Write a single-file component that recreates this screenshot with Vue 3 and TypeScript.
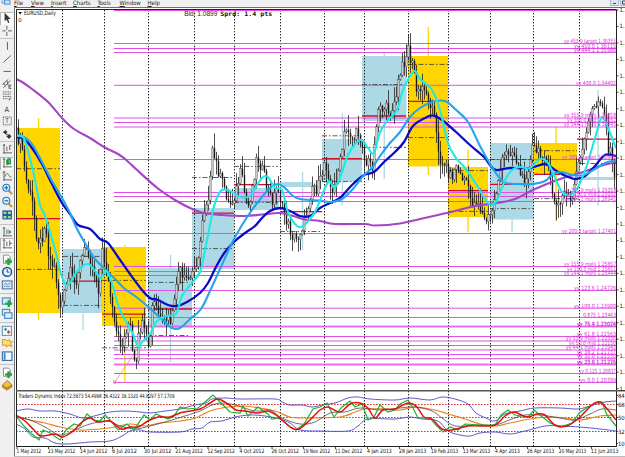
<script setup lang="ts">
/**
 * Trading terminal: menu bar, drawing toolbar and the EURUSD daily chart
 * with moving averages, monthly range boxes, fib levels and the TDI panel.
 */
type Point = [number, number]

interface Candle {
  x: number
  high: number
  low: number
  top: number
  height: number
  up: boolean
}

const menus = ['File', 'View', 'Insert', 'Charts', 'Tools', 'Window', 'Help']

const toolGroups: string[][] = [
  ['cursor', 'cross'],
  ['vline', 'trend', 'hline', 'channel', 'fibo', 'text', 'label', 'arrows'],
  ['bars', 'candles', 'line', 'zoomin', 'zoomout', 'tile'],
  ['scroll', 'shift'],
  ['add', 'clock', 'template'],
  ['order', 'windows'],
  ['market', 'star', 'terminal'],
  ['add', 'book'],
]
const pressed = ['cursor', 'candles', 'shift']

const separators = [62.5, 104.5, 148.5, 194.5, 234.5, 280.5, 324.5, 364.5, 408.5, 448.5, 490.5, 533.5, 579.5]

// Fib levels: y, label, left edge of the label
const levels: [number, string, number][] = [
  [10.5, '', 0],
  [43.5, 'yy 453.9 target 1.36355', 564],
  [48.5, 'yy 450.0 1.36115', 574],
  [52.5, 'yy 444.1 1.35988', 574],
  [85.3, 'yy 400.0  1.34402', 576],
  [118, 'yy 355.9 mofs 1.32858', 564],
  [122.5, 'yy 350.0 mid 1.32652', 567],
  [127, 'yy 344.1 mofs 1.32445', 564],
  [159.5, 'yy 300.0 target 1.30901', 562],
  [192.5, 'yy 255.9 mofs 1.29358', 564],
  [196.5, 'yy 250.0 mid 1.29152', 567],
  [201.5, 'yy 244.1 mofs 1.28945', 564],
  [233.5, 'yy 200.0 target 1.27401', 562],
  [266.5, 'yy 155.9 mofs 1.25857', 564],
  [271.5, 'yy 150.0 mid 1.25651', 567],
  [275.5, 'yy 144.1 mofs 1.25444', 564],
  [290.5, 'yy 123.6  1.24726', 574],
  [308.2, 'yy 100.0  1.23900', 574],
  [317.5, '0.875  1.23463', 583],
  [326.2, 'yy 76.4  1.23074', 577],
  [326.9, 'yy 75.0  1.23026', 577],
  [336.5, 'yy 61.8  1.22563', 577],
  [341, 'yy 55.9 mofs 1.22356', 566],
  [345.5, 'yy 50.0 mid 1.22150', 569],
  [350, 'yy 44.1 mofs 1.21943', 566],
  [354.5, 'yy 38.2  1.21737', 577],
  [358.7, 'yy 32.0  1.21530', 577],
  [364.1, 'yy 23.6  1.21226', 577],
  [364.9, 'yy 25.0  1.21275', 577],
  [373.5, 'yy 0.125 1.20837', 579],
  [382.5, 'yy 0.0  1.20399', 580],
]

// Monthly range boxes: x1, x2, top, bottom, colour
const boxes: [number, number, number, number, string][] = [
  [16, 60, 128, 313, 'gold'],
  [62.5, 102, 249, 313, 'blue'],
  [102, 146, 247, 326, 'gold'],
  [148, 192, 268, 326, 'blue'],
  [192, 234, 208, 269, 'blue'],
  [234.5, 279, 188, 210, 'blue'],
  [280, 313, 182, 187, 'blue'],
  [322, 362, 139, 181.5, 'blue'],
  [362, 406.5, 56, 121, 'blue'],
  [408, 448, 56, 166.5, 'gold'],
  [448, 488, 167, 217, 'gold'],
  [490, 533.5, 143, 219.5, 'blue'],
  [534, 577, 143, 174, 'gold'],
  [579, 616, 177, 180, 'blue'],
]

const ranges: [number, number, number, string][] = [
  [38.5, 118, 128, 'gold'], [38.5, 313, 320, 'gold'], [83, 313, 330, 'blue'],
  [124.8, 245, 382, 'gold'], [170.5, 255, 362, 'blue'], [302.5, 172, 250, 'blue'],
  [342.3, 113, 205, 'blue'], [384.2, 53, 179, 'blue'], [428.2, 27, 175, 'gold'],
  [468, 150, 232, 'gold'], [512, 219, 232, 'blue'], [556, 127, 221, 'gold'],
  [598, 90, 206, 'blue'],
]

const opens: [number, number, number][] = [
  [16, 60.5, 218.7], [67, 102, 281.2], [102, 146, 314.2], [148, 192, 309], [192, 234, 213.2],
  [234, 279, 184.6], [280, 322, 211.7], [322, 362, 158.7], [362, 406, 116], [408, 432, 101.3],
  [448, 488, 190.7], [490, 533, 184.4], [534, 560, 174.3], [577, 616, 139.2],
]

const pivots: [number, number, number][] = [
  [16, 60, 168.7], [16, 60, 269.4], [63, 102, 256.4], [63, 102, 305.4], [102, 146, 280.4],
  [102, 146, 347.8], [148, 190, 282.4], [148, 190, 335.5], [192, 234, 177.5], [192, 234, 248.6],
  [234, 278, 166.4], [234, 278, 202.4], [280, 320, 231.5], [322, 362, 135.8], [322, 362, 181.6],
  [362, 406, 84.5], [362, 406, 147.4], [408, 448, 64.4], [408, 448, 137.6], [448, 488, 170.6],
  [448, 488, 211.4], [490, 533, 159.5], [490, 533, 208.6], [534, 577, 150.7], [534, 577, 198.6],
  [580, 616, 163.5],
]

const slow: Point[] = [[16, 79], [22, 82], [32, 89], [48, 102], [62, 118], [74, 129], [90, 138], [104, 147], [118, 154], [125, 159], [136, 169], [148, 180], [160, 190], [175, 200], [190, 208], [204, 213], [222, 215], [245, 216], [262, 214.5], [280, 213], [293, 216], [305, 219.5], [320, 221], [335, 224], [365, 224], [375, 225.5], [400, 223.5], [420, 219], [440, 214.5], [455, 211], [475, 206], [497, 203], [515, 199], [535, 189], [560, 179], [580, 173], [600, 166], [616, 162]]
const navy: Point[] = [[16, 137], [24, 139], [32, 148], [42, 164], [52, 184], [62, 203], [70, 214], [78, 225], [90, 229], [100, 239], [108, 243], [118, 257], [130, 274], [142, 290], [150, 298], [158, 300], [168, 305], [177, 306], [187, 302], [200, 293], [208, 283], [217, 265], [225, 252], [235, 241], [245, 233], [255, 226], [262, 218], [270, 211], [280, 208], [290, 211], [300, 216], [310, 216], [320, 208], [330, 203], [340, 198], [352, 185], [364, 175], [374, 172], [385, 161], [395, 152], [404, 142], [413, 126], [425, 118], [433, 115.5], [442, 120], [455, 131], [470, 145], [484, 157], [490, 165], [496, 170], [510, 168], [530, 168], [545, 164], [555, 170], [566, 176], [576, 179], [585, 176], [595, 166], [605, 155], [616, 156]]
const azure: Point[] = [[16, 136], [24, 137], [32, 144], [42, 162], [52, 181], [62, 198], [70, 213], [76, 227], [85, 243], [95, 259], [105, 269], [115, 279], [125, 289], [135, 296], [145, 304], [155, 313], [165, 322], [172, 328], [180, 328], [190, 319], [201, 309], [210, 291], [220, 269], [232, 243], [242, 225], [252, 210], [262, 197], [270, 188], [278, 184], [285, 188], [293, 196], [300, 199], [312, 200], [322, 201], [332, 202], [342, 199], [352, 190], [364, 175], [372, 168], [380, 156], [390, 143], [400, 132], [410, 117], [420, 108], [432, 102], [445, 101], [455, 109], [468, 122], [480, 146], [490, 164], [498, 176], [506, 183], [520, 184], [533, 184], [545, 181], [553, 174], [562, 172], [572, 175], [584, 175], [595, 169], [605, 163], [616, 160]]
const cyan: Point[] = [[16, 136], [23, 137], [28, 151], [34, 175], [40, 205], [44, 213], [50, 232], [56, 253], [62, 277], [68, 285], [78, 270], [88, 264], [95, 271], [101, 278], [106, 271], [112, 283], [118, 305], [124, 318], [132, 332], [138, 347], [142, 342], [150, 334], [156, 322], [166, 316], [176, 314], [182, 296], [190, 285], [200, 272], [206, 245], [212, 215], [216, 200], [222, 190], [230, 191], [240, 197], [250, 196], [257, 185], [263, 177], [268, 177], [275, 188], [282, 190], [288, 212], [297, 226], [304, 225], [315, 212], [328, 182], [334, 188], [340, 178], [348, 155], [356, 143], [362, 140], [368, 148], [374, 153], [380, 132], [388, 120], [397, 110], [403, 90], [410, 76], [415, 71], [420, 79], [432, 90], [440, 110], [448, 143], [456, 158], [465, 168], [478, 187], [488, 203], [496, 202], [505, 180], [512, 170], [520, 167], [530, 168], [540, 159], [548, 163], [556, 180], [562, 192], [570, 195], [578, 187], [587, 165], [595, 138], [602, 117], [608, 128], [616, 148]]

const price: Point[] = [[16, 130], [20, 140], [24, 150], [26, 175], [30, 190], [34, 205], [36, 222], [38, 237], [42, 243], [46, 222], [50, 255], [52, 262], [56, 268], [60, 298], [62, 308], [64, 300], [68, 285], [71, 272], [76, 285], [80, 268], [84, 255], [88, 245], [92, 262], [96, 275], [100, 290], [103, 250], [106, 262], [109, 280], [112, 300], [116, 330], [120, 340], [124, 346], [127, 330], [131, 320], [133, 350], [137, 372], [140, 332], [143, 325], [148, 340], [151, 350], [153, 308], [156, 303], [160, 315], [163, 328], [168, 318], [172, 322], [176, 302], [178, 275], [181, 270], [184, 282], [188, 278], [192, 280], [195, 264], [200, 262], [203, 220], [208, 200], [211, 190], [213, 152], [217, 162], [222, 180], [226, 188], [230, 205], [234, 200], [238, 188], [242, 172], [246, 195], [249, 208], [253, 190], [258, 157], [262, 165], [265, 175], [270, 195], [274, 200], [279, 185], [283, 207], [288, 222], [293, 235], [298, 240], [302, 230], [306, 220], [311, 198], [314, 183], [318, 190], [322, 180], [326, 160], [330, 175], [333, 198], [337, 180], [342, 160], [346, 132], [349, 129], [354, 140], [359, 132], [364, 145], [366, 165], [370, 162], [374, 165], [378, 115], [382, 102], [386, 117], [388, 105], [392, 115], [396, 105], [400, 80], [404, 65], [408, 54], [409, 45], [412, 62], [415, 68], [418, 95], [422, 90], [426, 85], [430, 105], [434, 100], [437, 130], [440, 160], [443, 160], [448, 168], [452, 178], [456, 170], [458, 162], [460, 175], [468, 180], [470, 195], [475, 205], [478, 198], [482, 210], [486, 222], [492, 215], [497, 195], [500, 175], [504, 160], [508, 152], [512, 150], [516, 155], [520, 168], [524, 182], [528, 172], [532, 160], [534, 145], [538, 152], [542, 157], [546, 152], [550, 175], [554, 195], [558, 208], [562, 203], [566, 190], [570, 195], [574, 200], [577, 175], [580, 165], [584, 150], [588, 125], [592, 115], [597, 105], [602, 98], [606, 115], [609, 145], [612, 155], [616, 175]]

// Traders Dynamic Index
const bandTop: Point[] = [[16, 411], [28, 409], [40, 411], [55, 411], [70, 414], [83, 418], [98, 415], [110, 412], [125, 411], [140, 412], [150, 413], [165, 411], [180, 409], [195, 405], [206, 403], [212, 399], [225, 398], [240, 399], [275, 399], [282, 402], [290, 405], [302, 405], [312, 407], [322, 405], [335, 403], [348, 398], [358, 397], [370, 399], [395, 400], [410, 398], [430, 400], [442, 397], [455, 399], [468, 404], [476, 413], [486, 418], [495, 421], [505, 414], [520, 411], [535, 408], [560, 408], [578, 409], [590, 406], [605, 402], [616, 401]]
const bandLow: Point[] = [[16, 424], [25, 429], [33, 437], [45, 438], [55, 443], [68, 444], [90, 442], [110, 441], [122, 436], [130, 431], [140, 430], [150, 432], [180, 432], [192, 429], [202, 428], [210, 422], [222, 421], [235, 417], [250, 415], [265, 416], [280, 419], [290, 423], [300, 430], [320, 431], [348, 431], [358, 426], [368, 419], [395, 419], [410, 417], [422, 419], [438, 421], [448, 431], [460, 435], [470, 436], [480, 433], [495, 432], [510, 434], [525, 431], [545, 426], [560, 426], [580, 427], [600, 429], [616, 431]]
const base: Point[] = [[16, 416], [30, 420], [45, 423], [60, 427], [80, 430], [100, 429], [115, 427], [130, 424], [145, 426], [160, 423], [180, 421], [195, 418], [210, 411], [222, 408], [240, 406], [260, 408], [275, 411], [290, 417], [305, 418], [340, 417], [355, 412], [365, 409], [385, 409], [400, 410], [415, 407], [435, 410], [448, 414], [465, 419], [480, 424], [495, 426], [510, 423], [530, 419], [550, 417], [565, 418], [580, 420], [600, 416], [616, 415]]
const average: Point[] = [[16, 417], [30, 420], [45, 427], [60, 435], [75, 430], [90, 424], [108, 421], [120, 426], [135, 429], [150, 426], [165, 422], [185, 416], [200, 411], [212, 405], [222, 403], [235, 405], [255, 411], [270, 410], [282, 418], [300, 424], [315, 422], [330, 413], [345, 412], [360, 408], [380, 410], [400, 408], [415, 407], [432, 411], [442, 418], [455, 426], [475, 425], [495, 425], [512, 419], [525, 415], [540, 415], [560, 418], [575, 420], [590, 414], [602, 409], [616, 410]]
const signal: Point[] = [[16, 415], [25, 421], [34, 430], [41, 436], [55, 434], [62, 437], [72, 432], [82, 422], [90, 418], [98, 422], [110, 421], [121, 429], [130, 427], [138, 427], [148, 421], [158, 417], [170, 417], [180, 413], [200, 409], [210, 403], [218, 399], [228, 404], [236, 410], [245, 411], [257, 413], [268, 411], [276, 415], [283, 421], [292, 428], [299, 429], [310, 420], [320, 410], [328, 407], [340, 412], [350, 404], [360, 403], [368, 408], [375, 418], [383, 410], [395, 409], [408, 403], [416, 406], [424, 417], [432, 419], [442, 429], [452, 430], [468, 426], [480, 426], [495, 425], [505, 416], [514, 412], [527, 417], [537, 414], [545, 415], [555, 425], [567, 426], [580, 417], [592, 405], [600, 402], [608, 410], [616, 420]]
const rsi: Point[] = [[16, 416], [24, 426], [32, 434], [39, 440], [43, 430], [50, 433], [60, 440], [66, 430], [74, 424], [80, 426], [87, 414], [94, 420], [100, 421], [105, 415], [110, 420], [118, 430], [127, 424], [134, 430], [144, 415], [150, 420], [156, 414], [168, 419], [174, 416], [180, 407], [187, 409], [198, 408], [205, 402], [213, 395], [220, 402], [230, 412], [240, 413], [243, 406], [248, 416], [258, 407], [268, 414], [272, 419], [280, 418], [290, 427], [296, 430], [304, 424], [313, 409], [320, 407], [327, 403], [334, 417], [342, 407], [350, 401], [355, 407], [362, 404], [368, 420], [374, 417], [380, 405], [388, 412], [395, 410], [400, 404], [408, 400], [413, 408], [418, 418], [430, 418], [436, 425], [443, 432], [450, 427], [458, 430], [465, 424], [480, 425], [495, 425], [501, 415], [508, 410], [515, 415], [528, 417], [534, 410], [540, 415], [550, 423], [560, 427], [572, 423], [580, 412], [595, 403], [602, 402], [607, 415], [616, 426]]

const dates: [number, string][] = [
  [17, '1 May 2012'], [48.5, '23 May 2012'], [80.5, '14 Jun 2012'], [112.5, '6 Jul 2012'],
  [144.5, '30 Jul 2012'], [176, '21 Aug 2012'], [208, '12 Sep 2012'], [240, '4 Oct 2012'],
  [272, '26 Oct 2012'], [303.5, '19 Nov 2012'], [335.5, '11 Dec 2012'], [367.5, '4 Jan 2013'],
  [399.5, '28 Jan 2013'], [431.5, '19 Feb 2013'], [463.5, '13 Mar 2013'], [495.5, '4 Apr 2013'],
  [527.5, '26 Apr 2013'], [559.5, '20 May 2013'], [591.5, '11 Jun 2013'],
]

const ticks = Array.from({ length: 24 }, (_, i) => 10 + i * 16.46)
const tdiTicks: [number, string][] = [[395.5, '84.'], [404.5, '68'], [417.5, '50'], [431.5, '32'], [443.5, '10.']]

function toLine(points: Point[]): string {
  return points.map(([x, y]) => `${x},${y}`).join(' ')
}

// Catmull-Rom spline so the averages bend smoothly
function toCurve(p: Point[]): string {
  let d = `M${p[0][0]} ${p[0][1]}`
  for (let i = 0; i < p.length - 1; i++) {
    const a = p[Math.max(i - 1, 0)]
    const b = p[i]
    const c = p[i + 1]
    const e = p[Math.min(i + 2, p.length - 1)]
    d += `C${b[0] + (c[0] - a[0]) / 6} ${b[1] + (c[1] - a[1]) / 6} ${c[0] - (e[0] - b[0]) / 6} ${c[1] - (e[1] - b[1]) / 6} ${c[0]} ${c[1]}`
  }
  return d
}

function priceAt(x: number): number {
  const i = price.findIndex(p => p[0] >= x)
  if (i <= 0) return price[i === 0 ? 0 : price.length - 1][1]
  const [x0, y0] = price[i - 1]
  const [x1, y1] = price[i]
  return y0 + ((y1 - y0) * (x - x0)) / (x1 - x0)
}

function noise(n: number): number {
  const v = Math.sin(n * 12.9898) * 43758.5453
  return v - Math.floor(v)
}

const candles: Candle[] = []
let open = priceAt(16)
for (let i = 0; i < 300; i++) {
  const x = 16.5 + i * 2
  const close = priceAt(x + 1) + (noise(i) - 0.5) * 12
  const top = Math.min(open, close)
  const bottom = Math.max(open, close)
  candles.push({
    x,
    high: top - 1 - noise(i + 400) ** 2 * 14,
    low: bottom + 1 + noise(i + 900) ** 2 * 14,
    top,
    height: Math.max(bottom - top, 1),
    up: close < open,
  })
  open = close
}
</script>

<template>
  <div class="terminal">
    <header class="menu">
      <svg class="menu__logo" viewBox="0 0 10 6">
        <rect x="1" y="-2" width="6" height="5" fill="#d8ebfa" stroke="#4a8cc8" stroke-width=".8" />
        <rect x="3.5" y="0" width="5.5" height="4.2" fill="#c3dff6" stroke="#3f7fc0" stroke-width=".8" />
      </svg>
      <nav class="menu__items">
        <span v-for="item in menus" :key="item" class="menu__item" :class="`menu__item--${item.toLowerCase()}`"><u>{{ item[0] }}</u>{{ item.slice(1) }}</span>
      </nav>
      <svg class="menu__controls" viewBox="0 0 15 7">
        <path d="M.5-1V5.5H8.5V-1M10.5-1V5.5H17" fill="#dbe6f2" stroke="#9aabbd" stroke-width=".8" />
        <path d="M3 3.5H6M12.5 1H15M12.5 1V4H15" fill="none" stroke="#34495e" />
      </svg>
    </header>

    <div class="workspace">
      <aside class="tools">
        <div v-for="(group, g) in toolGroups" :key="g" class="tools__group" :class="{ 'tools__group--tall': g === 2, 'tools__group--loose': g > 4 }">
          <div v-for="tool in group" :key="tool" class="tool" :class="{ 'tool--pressed': pressed.includes(tool) }">
            <svg viewBox="0.8 0.8 10.6 10.6" class="tool__icon">
              <path v-if="tool === 'cursor'" d="M4 1.5V9L5.8 7.5L7 10.5L8.2 10L7 7H9.3Z" fill="#333" />
              <path v-else-if="tool === 'cross'" d="M6 1.5V5M6 7V10.5M2 6H5M7 6H10.5" class="ink" />
              <path v-else-if="tool === 'vline'" d="M6.5 2.5V9.5" class="ink" />
              <path v-else-if="tool === 'trend'" d="M3 9L9.5 3" class="ink" />
              <path v-else-if="tool === 'hline'" d="M3 6.5H9.5" class="ink" />
              <path v-else-if="tool === 'channel'" d="M2 7L7 2M3 9.5L9 3M3 5L5 8M6 3L7 7M10 7H7.8V10H10M7.8 8.5H9.5" class="ink" />
              <path v-else-if="tool === 'fibo'" d="M2.5 2.5H9.5M2.5 4.5H9.5M2.5 6.5H9.5M2.5 8.5H7M10 8H8V10.5M8 9.2H9.5" class="ink" stroke-dasharray="1 .5" />
              <text v-else-if="tool === 'text'" x="3.8" y="8.8" class="glyph">A</text>
              <g v-else-if="tool === 'label'">
                <rect x="2.8" y="2.5" width="7" height="7" class="ink" stroke-dasharray="1 .7" />
                <text x="4.5" y="8.3" class="glyph glyph--small">T</text>
              </g>
              <path v-else-if="tool === 'arrows'" d="M2.5 4.5L4.8 2.5L6.5 4.5L5 6.5ZM5.5 8L8 6L10 8L8 10.5ZM4.5 6L7 8V6.5Z" fill="#333" />
              <g v-else-if="tool === 'bars' || tool === 'candles' || tool === 'line'">
                <path d="M3.5 2V10M2.5 9.5H10.5M2.6 3.2L3.5 2L4.4 3.2" class="ink" />
                <path v-if="tool === 'bars'" d="M6 4V8M8.5 3V7M8.5 3H10" class="ink" />
                <path v-else-if="tool === 'candles'" d="M6 3V8M7 2.5H9V7H7Z" fill="#7fd68f" stroke="#178a2c" />
                <path v-else d="M4 7Q6 2 7.5 5T10 7" class="ink ink--green" />
              </g>
              <g v-else-if="tool === 'zoomin' || tool === 'zoomout'">
                <path d="M7.5 7.5L10.5 10.5" stroke="#c49a2a" stroke-width="1.8" />
                <circle cx="5.5" cy="5" r="3.1" fill="#d8efff" stroke="#2c7cc0" />
                <path d="M3.8 5H7.2" stroke="#1b63a8" />
                <path v-if="tool === 'zoomin'" d="M5.5 3.3V6.7" stroke="#1b63a8" />
              </g>
              <g v-else-if="tool === 'tile'">
                <rect x="2" y="2" width="8.5" height="8" fill="#2c5c9a" />
                <path d="M3 3.2H5.6V5.3H3ZM7 7H9.5V9H7Z" fill="#8de08b" />
                <path d="M7 3.2H9.5V5.3H7ZM3 7H5.6V9H3Z" fill="#a9dfb8" />
              </g>
              <g v-else-if="tool === 'scroll' || tool === 'shift'">
                <path d="M3.5 2V10M2.5 9.5H10.5M2.6 3.2L3.5 2L4.4 3.2M6 4V8" class="ink" />
                <path v-if="tool === 'scroll'" d="M7.5 4L10 6L7.5 8Z" fill="#21993a" />
                <path v-else d="M8.5 3V8M8.5 5.5H10.5" class="ink" />
              </g>
              <g v-else-if="tool === 'add'">
                <path d="M3 1.8H7.5L9 3.5V9H3Z" fill="#fff" stroke="#777" stroke-width=".7" />
                <path d="M7.5 4.5V10.5M4.5 7.5H10.5" stroke="#1fa83a" stroke-width="2.2" />
              </g>
              <g v-else-if="tool === 'clock'">
                <circle cx="6.2" cy="6" r="3.9" fill="#e9f5ff" stroke="#17599e" stroke-width="1.3" />
                <path d="M6.2 3.5V6.2H8.2" fill="none" stroke="#234" stroke-width=".8" />
              </g>
              <g v-else-if="tool === 'template'">
                <rect x="2" y="2.5" width="8.5" height="7" fill="#e3f0fa" stroke="#4c7ba6" />
                <path d="M3.2 6L5 4.3L6.5 6L9.2 4M3.2 8L5 6.8L7 8L9 6.5" fill="none" stroke="#44708f" stroke-width=".7" />
              </g>
              <g v-else-if="tool === 'order'">
                <rect x="2" y="2.5" width="7" height="5.5" fill="#d4eafa" stroke="#4b8abf" />
                <path d="M7.7 4.5V10.5M4.7 7.5H10.7" stroke="#1fa83a" stroke-width="2.1" />
              </g>
              <g v-else-if="tool === 'windows'" fill="#dcedfa" stroke="#4b8abf">
                <rect x="2" y="2" width="6.5" height="5" />
                <rect x="4" y="5" width="6.5" height="5" />
              </g>
              <g v-else-if="tool === 'market'">
                <rect x="2" y="2" width="8" height="8" fill="#f5fbff" stroke="#6b9cbf" />
                <path d="M3.3 4.7L5 3L6.3 4.7L4.7 6Z" fill="#2ba344" />
                <path d="M5.8 7L7.5 5.3L9.2 7L7.5 8.7Z" fill="#d8452e" />
              </g>
              <path v-else-if="tool === 'star'" d="M2 3H5L6 4H7.5L8.3 3L9 5H11L9.5 6.7L10.3 9.5L8 8L5.5 9.5V8H2Z" fill="#fbdd71" stroke="#cb961d" stroke-width=".8" />
              <g v-else-if="tool === 'terminal'">
                <rect x="2" y="2.5" width="8.5" height="7.5" fill="#f3f9ff" stroke="#356fa5" />
                <path d="M4 3V9.5" stroke="#3e86c4" stroke-width="1.6" />
              </g>
              <g v-else>
                <path d="M2 6.2L6.5 2L10.5 6L6 9Z" fill="#f4bf40" stroke="#a8700d" stroke-width=".7" />
                <path d="M2 6.2V8L6 10.8L10.5 7.8V6L6 9Z" fill="#d28f1c" stroke="#a8700d" stroke-width=".5" />
              </g>
            </svg>
          </div>
        </div>
      </aside>

      <svg class="chart" viewBox="14 7 611 450">
        <defs>
          <clipPath id="plot"><rect x="16" y="10" width="600.5" height="437" /></clipPath>
        </defs>
        <rect x="14" y="7" width="611" height="450" fill="#fff" />

        <g clip-path="url(#plot)">
          <rect v-for="(b, i) in boxes" :key="`b${i}`" :x="b[0]" :y="b[2]" :width="b[1] - b[0]" :height="b[3] - b[2]" :class="`box--${b[4]}`" />
          <rect x="234.5" y="192" width="44.5" height="9" fill="#bfc4ed" />
          <rect v-for="(r, i) in ranges" :key="`r${i}`" :x="r[0] - 0.6" :y="r[1]" width="1.3" :height="r[2] - r[1]" :class="`box--${r[3]}`" />

          <line v-for="x in separators" :key="`s${x}`" :x1="x" :x2="x" y1="10" y2="446" class="separator" />
          <line v-for="(l, i) in levels" :key="`l${i}`" x1="114" x2="616" :y1="l[0]" :y2="l[0]" class="level" />
          <line v-for="(p, i) in pivots" :key="`p${i}`" :x1="p[0]" :x2="p[1]" :y1="p[2]" :y2="p[2]" class="pivot" />
          <line v-for="(o, i) in opens" :key="`o${i}`" :x1="o[0]" :x2="o[1]" :y1="o[2]" :y2="o[2]" class="open" />
          <path d="M114.5 382.5L140 345" class="anchor" />
          <rect x="113.5" y="381" width="2.2" height="2.2" fill="none" stroke="#f07a50" stroke-width=".7" />

          <g v-for="c in candles" :key="c.x">
            <line :x1="c.x" :x2="c.x" :y1="c.high" :y2="c.low" class="wick" />
            <rect :x="c.x - 0.7" :y="c.top" width="1.4" :height="c.height" :class="c.up ? 'body--up' : 'body--down'" />
          </g>

          <path :d="toCurve(slow)" class="ma ma--slow" />
          <path :d="toCurve(navy)" class="ma ma--navy" />
          <path :d="toCurve(azure)" class="ma ma--azure" />
          <path :d="toCurve(cyan)" class="ma ma--cyan" />
        </g>

        <g class="level-labels">
          <template v-for="(l, i) in levels" :key="`t${i}`">
            <text v-if="l[1]" :x="l[2]" :y="l[0] - 0.6" :textLength="616 - l[2]" lengthAdjust="spacingAndGlyphs">{{ l[1] }}</text>
          </template>
        </g>

        <path d="M18.3 12H22L20.1 14.6Z" fill="#111" />
        <text x="24" y="15.4" class="caption" textLength="32" lengthAdjust="spacingAndGlyphs">EURUSD,Daily</text>
        <text x="18.3" y="21.7" class="caption">0</text>
        <text x="184.3" y="16.3" class="bid" textLength="33" lengthAdjust="spacingAndGlyphs">Bid: 1.0899</text>
        <text x="220.3" y="16" class="spread" textLength="52" lengthAdjust="spacingAndGlyphs">Sprd: 1.4 pts</text>

        <line v-for="y in [404.5, 417.5, 431.5]" :key="y" x1="16" x2="616" :y1="y" :y2="y" class="tdi-level" />
        <g class="tdi">
          <path :d="toCurve(bandTop)" stroke="#4a48c4" />
          <path :d="toCurve(bandLow)" stroke="#4a48c4" />
          <path :d="toCurve(base)" stroke="#f08018" stroke-width="1.2" />
          <path :d="toCurve(average)" stroke="#333" stroke-width=".7" />
          <polyline :points="toLine(rsi)" stroke="#20b030" stroke-width="1.2" />
          <path :d="toCurve(signal)" stroke="#e01010" stroke-width="1.5" />
        </g>
        <text x="18.5" y="398" class="caption" textLength="156" lengthAdjust="spacingAndGlyphs">Traders Dynamic Index 72.5673 54.4998 36.4322 39.1320 44.8297 57.1709</text>

        <path d="M14.5 457V7.5H625" fill="none" stroke="#707070" />
        <path d="M16.5 446.5V9.5H616.5V446.5Z" fill="none" stroke="#222" />
        <rect x="16" y="390" width="609" height="1.5" fill="#555" />
        <rect x="14" y="456" width="611" height="1" fill="#bbb" />

        <g class="axis">
          <template v-for="y in ticks" :key="`a${y}`">
            <line x1="617" x2="618.5" :y1="y" :y2="y" />
            <text x="619.5" :y="y + 2">{{ y < 178 ? '1.3' : '1.2' }}</text>
          </template>
          <template v-for="t in tdiTicks" :key="t[1]">
            <line x1="617" x2="618" :y1="t[0]" :y2="t[0]" />
            <text x="618" :y="t[0] + 2">{{ t[1] }}</text>
          </template>
          <template v-for="d in dates" :key="d[1]">
            <line :x1="d[0]" :x2="d[0]" y1="447" y2="449" />
            <text :x="d[0] - 0.5" y="453.4" :textLength="d[1].length * 2.48" lengthAdjust="spacingAndGlyphs">{{ d[1] }}</text>
          </template>
        </g>
      </svg>
    </div>
  </div>
</template>

<style>
body {
  margin: 0;
  overflow: hidden;
}
</style>

<style scoped>
.terminal {
  display: flex;
  flex-direction: column;
  width: 625px;
  height: 457px;
  overflow: hidden;
  background: #f0f0f0;
  font-family: "DejaVu Sans Condensed", "DejaVu Sans", sans-serif;
}

/* Menu bar */
.menu {
  display: flex;
  height: 7px;
  overflow: hidden;
}
.menu__logo {
  width: 10px;
  height: 6px;
  margin: 0 3px 0 1px;
}
.menu__items {
  display: flex;
  flex: 1;
  height: 7px;
  margin-top: -1px;
  font-size: 6px;
  line-height: 7px;
  color: #222;
}
.menu__item { width: 22px; }
.menu__item--file { width: 17px; }
.menu__item--view { width: 20px; }
.menu__item--charts { width: 24.5px; }
.menu__item--window { width: 28px; }
.menu__controls {
  width: 15px;
  height: 7px;
}

.workspace {
  display: flex;
  height: 450px;
}
.chart {
  width: 611px;
  height: 450px;
}

/* Toolbar */
.tools {
  box-sizing: border-box;
  width: 14px;
  padding-top: 5px;
  background: #f0f0f0;
}
.tools__group + .tools__group {
  margin-top: 1px;
  padding-top: 1px;
  border-top: 1px solid #c4c4c4;
}
.tools__group + .tools__group--loose {
  margin-top: 1.6px;
  padding-top: 1.6px;
}
.tool {
  box-sizing: border-box;
  height: 12.55px;
  width: 13px;
}
.tools__group--tall .tool { height: 13.2px; }
.tool--pressed {
  background: #fafafa;
  box-shadow: inset 1px 1px 0 #b5b5b5;
}
.tool__icon {
  display: block;
  width: 12px;
  height: 12px;
  margin-left: 0.5px;
}
.ink { fill: none; stroke: #555; stroke-width: 0.8; }
.ink--green { stroke: #2c8a3c; }
.glyph { font-size: 6.5px; fill: #333; }
.glyph--small { font-size: 5.5px; }

/* Price panel */
.box--gold { fill: #ffd500; }
.box--blue { fill: #add8e6; }
.separator { stroke: #222; stroke-width: 1; stroke-dasharray: 1.4 1.6; }
.level { stroke: #e052e0; stroke-width: 1; }
.pivot { stroke: #333; stroke-width: 0.8; stroke-dasharray: 5 2 1.5 2; }
.open { stroke: #d01028; stroke-width: 1.3; }
.anchor { fill: none; stroke: #f08060; stroke-width: 0.7; }
.ma { fill: none; stroke-linejoin: round; }
.ma--slow { stroke: #a644c8; stroke-width: 2.1; }
.ma--navy { stroke: #0c0cc8; stroke-width: 2.3; }
.ma--azure { stroke: #22a4ee; stroke-width: 2.1; }
.ma--cyan { stroke: #20e8e4; stroke-width: 2.1; }
.wick { stroke: #222; stroke-width: 0.8; }
.body--up { fill: #c8c8c8; stroke: #333; stroke-width: 0.35; }
.body--down { fill: #1a1a1a; }

.level-labels { font-size: 5.7px; fill: #e02ce0; }
.caption { font-size: 5.9px; fill: #111; }
.bid { font-family: "Liberation Sans", sans-serif; font-size: 7px; fill: #222; }
.spread { font-family: "DejaVu Sans Mono", monospace; font-size: 6.2px; font-weight: bold; fill: #111; }

/* TDI panel */
.tdi { fill: none; stroke-width: 0.9; }
.tdi-level { stroke: #d83030; stroke-dasharray: 1.6 1.4; }

.axis { font-size: 5.9px; fill: #111; }
.axis line { stroke: #222; stroke-width: 0.8; }
</style>
